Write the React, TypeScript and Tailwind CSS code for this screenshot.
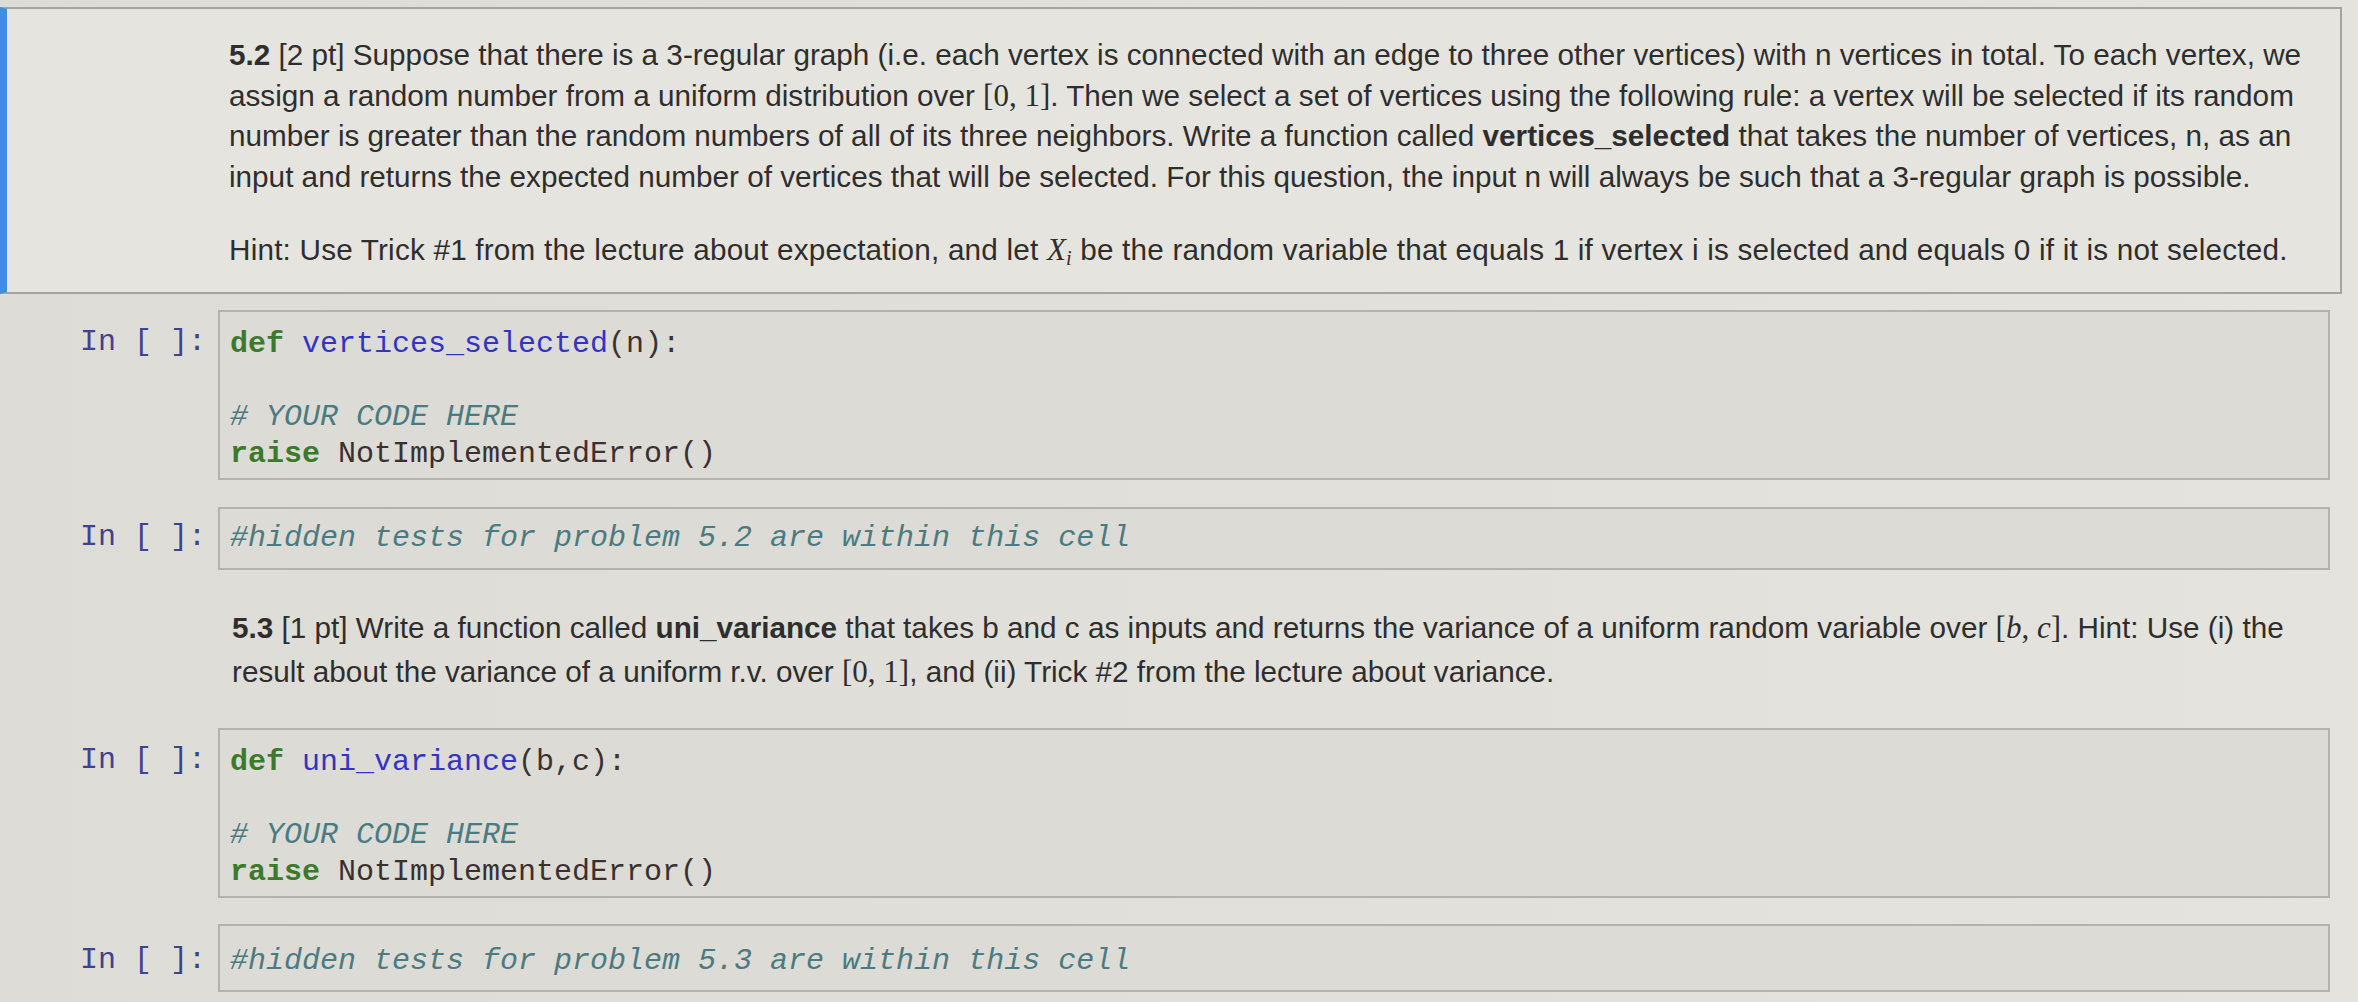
import React from 'react'

const sans = { fontFamily: '"Liberation Sans", Arial, sans-serif' }
const mono = { fontFamily: '"Liberation Mono", "Courier New", monospace' }
const serif = { fontFamily: '"Liberation Serif", "Times New Roman", serif' }

function Prompt() {
    return (
        <div className="w-[218px] flex-none pr-[12px] text-right text-[30px] leading-[36px] text-[#3d4390]" style={mono}>
            In [ ]:
        </div>
    )
}

function Interval({a, b, italic}: {a: string; b: string; italic?: boolean}) {
    return (
        <span className="text-[31px]" style={serif}>
            [<span className={italic ? 'italic' : ''}>{a}</span>, <span className={italic ? 'italic' : ''}>{b}</span>]
        </span>
    )
}

function DefCell({name, args}: {name: string; args: string}) {
    return (
        <div className="flex">
            <div className="pt-[14px]"><Prompt /></div>
            <div className="h-[170px] w-[2112px] border-2 border-[#b4b2ad] bg-[#dddbd5] pl-[10px] pt-[14px] text-[30px] leading-[36.5px]" style={mono}>
                <div>
                    <span className="font-bold text-[#3b7a2c]">def</span>{' '}
                    <span className="text-[#3333c4]">{name}</span>
                    <span className="text-[#3a3232]">({args}):</span>
                </div>
                <div>&nbsp;</div>
                <div className="italic text-[#4a7b82]"># YOUR CODE HERE</div>
                <div>
                    <span className="font-bold text-[#3b7a2c]">raise</span>{' '}
                    <span className="text-[#3a3030]">NotImplementedError()</span>
                </div>
            </div>
        </div>
    )
}

function HiddenCell({num, last}: {num: string; last?: boolean}) {
    return (
        <div className="flex">
            <div className={last ? 'pt-[18px]' : 'pt-[12px]'}><Prompt /></div>
            <div className={`${last ? 'h-[68px] pt-[17px]' : 'h-[63px] pt-[11px]'} w-[2112px] border-2 border-[#b4b2ad] bg-[#dddbd5] pl-[10px] text-[30px] italic leading-[36.5px] text-[#4a7b82]`} style={mono}>
                #hidden tests for problem {num} are within this cell
            </div>
        </div>
    )
}

export default function App() {
    return (
        <div className="h-[1002px] w-full overflow-hidden bg-gradient-to-r from-[#dedcd6] to-[#e5e3de] text-[#2e2e2e]" style={sans}>
            {/* Markdown 5.2 */}
            <div className="mt-[7px] h-[287px] w-[2342px] border-2 border-l-[7px] border-[#a6a49f] border-l-[#3d8ee3] bg-[#e6e4df] pl-[222px] pt-[26px] text-[29.7px] leading-[40.6px]">
                <div className="whitespace-nowrap"><b>5.2</b> [2 pt] Suppose that there is a 3-regular graph (i.e. each vertex is connected with an edge to three other vertices) with n vertices in total. To each vertex, we</div>
                <div className="whitespace-nowrap">assign a random number from a uniform distribution over <Interval a="0" b="1" />. Then we select a set of vertices using the following rule: a vertex will be selected if its random</div>
                <div className="whitespace-nowrap">number is greater than the random numbers of all of its three neighbors. Write a function called <b>vertices_selected</b> that takes the number of vertices, n, as an</div>
                <div className="whitespace-nowrap">input and returns the expected number of vertices that will be selected. For this question, the input n will always be such that a 3-regular graph is possible.</div>
                <div className="mt-[33px] whitespace-nowrap tracking-[0.2px]">Hint: Use Trick #1 from the lecture about expectation, and let <span className="text-[31px] italic" style={serif}>X<sub className="text-[20px]">i</sub></span> be the random variable that equals 1 if vertex i is selected and equals 0 if it is not selected.</div>
            </div>

            <div className="mt-[16px] flex flex-col gap-[27px]">
                <DefCell name="vertices_selected" args="n" />
                <HiddenCell num="5.2" />
            </div>

            {/* Markdown 5.3 */}
            <div className="pl-[232px] pt-[36px] text-[29.7px] leading-[44px]">
                <div className="whitespace-nowrap"><b>5.3</b> [1 pt] Write a function called <b>uni_variance</b> that takes b and c as inputs and returns the variance of a uniform random variable over <Interval a="b" b="c" italic />. Hint: Use (i) the</div>
                <div className="whitespace-nowrap">result about the variance of a uniform r.v. over <Interval a="0" b="1" />, and (ii) Trick #2 from the lecture about variance.</div>
            </div>

            <div className="mt-[34px] flex flex-col gap-[26px]">
                <DefCell name="uni_variance" args="b,c" />
                <HiddenCell num="5.3" last />
            </div>
        </div>
    )
}
